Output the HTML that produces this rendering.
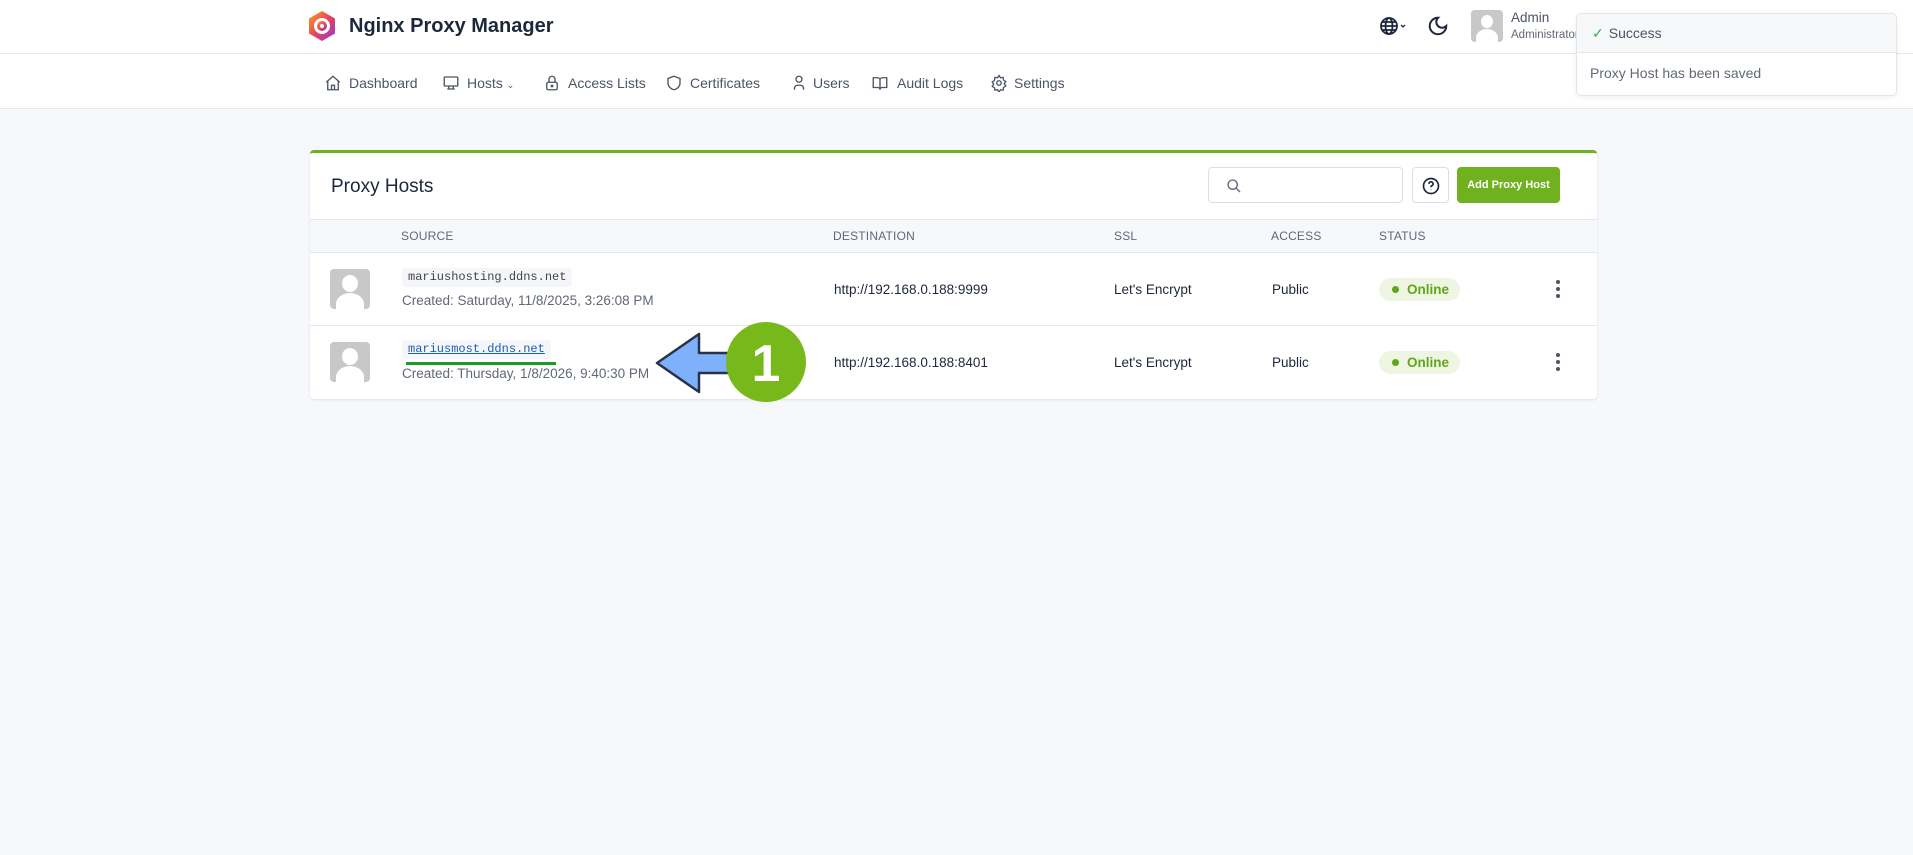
<!DOCTYPE html>
<html><head><meta charset="utf-8"><style>
*{box-sizing:border-box;margin:0;padding:0}
body{width:1913px;height:855px;background:#f6f8fb;font-family:"Liberation Sans",sans-serif;color:#1d273b;position:relative;overflow:hidden}
.abs{position:absolute}
.hdr{left:0;top:0;width:1913px;height:54px;background:#fff;border-bottom:1px solid #e6e8eb}
.nav{left:0;top:54px;width:1913px;height:55px;background:#fff;border-bottom:1px solid #e6e8eb}
.ni{position:absolute;top:74px;height:18px;font-size:14px;color:#4b5565}
.ni svg{position:absolute;left:0;top:0}
.ni span{position:absolute;top:0;line-height:18px;white-space:nowrap}
.card{left:310px;top:150px;width:1287px;height:249px;background:#fff;border-top:3px solid #6fb11e;border-radius:4px;box-shadow:0 1px 2px rgba(0,0,0,.1)}
.th{position:absolute;top:229px;font-size:12px;color:#616876;letter-spacing:.2px}
.t{position:absolute;font-size:13.5px}
.chip{position:absolute;left:402px;height:19px;background:#f4f6f9;border-radius:4px;font-family:"Liberation Mono",monospace;font-size:12px;color:#444;padding:2px 6px}
.av{position:absolute;left:330px;width:40px;height:40px;background:#c8c8c8;border-radius:4px;overflow:hidden}
.pill{position:absolute;left:1379px;width:81px;height:23px;background:#eef6e3;border-radius:12px;color:#5fa618;font-size:13.5px;font-weight:bold;padding:4px 0 0 28px}
.pill:before{content:"";position:absolute;left:13px;top:8px;width:7px;height:7px;border-radius:50%;background:#5fa618}
.dots{position:absolute;left:1556px;width:4px}
.dots i{display:block;width:4px;height:4px;border-radius:50%;background:#4b5565;margin-bottom:3px}
</style></head><body>
<div class="abs hdr"></div>
<svg class="abs" style="left:307px;top:10px" width="30" height="32" viewBox="0 0 30 32"><defs><linearGradient id="g" x1="0" y1="0" x2="1" y2="1"><stop offset="0" stop-color="#f5a623"/><stop offset=".5" stop-color="#e8445a"/><stop offset="1" stop-color="#8e3bd1"/></linearGradient></defs><polygon points="15,1 28,8.5 28,23.5 15,31 2,23.5 2,8.5" fill="url(#g)"/><circle cx="15" cy="16" r="8" fill="#fff"/><circle cx="15" cy="16" r="5" fill="url(#g)"/><circle cx="15" cy="16" r="2" fill="#fff"/></svg>
<div class="abs" style="left:349px;top:15px;font-size:20px;font-weight:bold;color:#1d273b">Nginx Proxy Manager</div>
<svg class="abs" style="left:1379px;top:16px" width="30" height="20" viewBox="0 0 30 20" fill="none" stroke="#1d273b" stroke-width="1.8"><circle cx="10" cy="10" r="8"/><ellipse cx="10" cy="10" rx="3.5" ry="8"/><path d="M2 10h16M3.5 6h13M3.5 14h13"/><path d="M22 9l2 2 2-2" stroke-width="1.3"/></svg>
<svg class="abs" style="left:1427px;top:14px" width="22" height="24" viewBox="0 0 24 24" fill="none" stroke="#1d273b" stroke-width="2.2" stroke-linecap="round"><path d="M12 3a6 6 0 0 0 9 9 9 9 0 1 1-9-9z"/></svg>
<div class="abs" style="left:1471px;top:10px;width:32px;height:32px;background:#c8c8c8;border-radius:4px;overflow:hidden"><div style="position:absolute;left:10px;top:5px;width:12px;height:13px;border-radius:50%;background:#fff"></div><div style="position:absolute;left:5px;top:19px;width:22px;height:18px;border-radius:50% 50% 0 0;background:#fff"></div></div>
<div class="abs" style="left:1511px;top:10px;font-size:13.5px;color:#4b5565">Admin</div>
<div class="abs" style="left:1511px;top:29px;font-size:11.5px;color:#616876">Administrator</div>
<div class="abs nav"></div>
<div class="ni" style="left:324px"><svg width="18" height="18" viewBox="0 0 24 24" fill="none" stroke="#4b5565" stroke-width="1.8"><path d="M3 11l9-8 9 8M5 10v11h14V10M10 21v-6h4v6"/></svg><span style="left:25px">Dashboard</span></div>
<div class="ni" style="left:442px"><svg width="18" height="18" viewBox="0 0 24 24" fill="none" stroke="#4b5565" stroke-width="1.8"><rect x="3" y="4" width="18" height="12" rx="1"/><path d="M7 20h10M9 16v4M15 16v4"/></svg><span style="left:25px">Hosts <small style="font-size:9px">&#8964;</small></span></div>
<div class="ni" style="left:543px"><svg width="18" height="18" viewBox="0 0 24 24" fill="none" stroke="#4b5565" stroke-width="1.8"><rect x="5" y="11" width="14" height="10" rx="2"/><path d="M8 11V7a4 4 0 0 1 8 0v4"/><circle cx="12" cy="16" r="1"/></svg><span style="left:25px">Access Lists</span></div>
<div class="ni" style="left:665px"><svg width="18" height="18" viewBox="0 0 24 24" fill="none" stroke="#4b5565" stroke-width="1.8"><path d="M12 3l8 3v6c0 5-4 8-8 9-4-1-8-4-8-9V6z"/></svg><span style="left:25px">Certificates</span></div>
<div class="ni" style="left:790px"><svg width="18" height="18" viewBox="0 0 24 24" fill="none" stroke="#4b5565" stroke-width="1.8"><circle cx="12" cy="7" r="4"/><path d="M6 21v-2a4 4 0 0 1 4-4h4a4 4 0 0 1 4 4v2"/></svg><span style="left:23px">Users</span></div>
<div class="ni" style="left:871px"><svg width="18" height="18" viewBox="0 0 24 24" fill="none" stroke="#4b5565" stroke-width="1.8"><path d="M3 5h6a3 3 0 0 1 3 3v13a3 3 0 0 0-3-3H3zM21 5h-6a3 3 0 0 0-3 3v13a3 3 0 0 1 3-3h6z"/></svg><span style="left:26px">Audit Logs</span></div>
<div class="ni" style="left:990px"><svg width="18" height="18" viewBox="0 0 24 24" fill="none" stroke="#4b5565" stroke-width="1.8"><circle cx="12" cy="12" r="3"/><path d="M12 2l2 3 3.5-.5.5 3.5 3 2-2 3 2 3-3 2-.5 3.5-3.5-.5-2 3-2-3-3.5.5L6 18.5l-3-2 2-3-2-3 3-2L6.5 4.5 10 5z"/></svg><span style="left:24px">Settings</span></div>

<div class="abs" style="left:1576px;top:13px;width:321px;height:83px;background:#fff;border:1px solid #e2e5ea;border-radius:5px;box-shadow:0 2px 6px rgba(0,0,0,.06);overflow:hidden">
<div style="height:39px;background:#f7f8fa;border-bottom:1px solid #e6e8eb;padding:11px 0 0 15px;font-size:14px;color:#4b5565"><span style="color:#2fb344;margin-right:5px">&#10003;</span>Success</div>
<div style="padding:12px 0 0 13px;font-size:14px;color:#616876">Proxy Host has been saved</div></div>

<div class="abs card"></div>
<div class="abs" style="left:331px;top:176px;font-size:19px;color:#1d273b">Proxy Hosts</div>
<div class="abs" style="left:1208px;top:167px;width:195px;height:36px;border:1px solid #dadfe5;border-radius:4px"><svg style="position:absolute;left:17px;top:10px" width="16" height="16" viewBox="0 0 24 24" fill="none" stroke="#616876" stroke-width="2"><circle cx="10" cy="10" r="7"/><path d="M15 15l6 6"/></svg></div>
<div class="abs" style="left:1412px;top:167px;width:37px;height:36px;border:1px solid #dadfe5;border-radius:4px"><svg style="position:absolute;left:8px;top:8px" width="20" height="20" viewBox="0 0 24 24" fill="none" stroke="#1d273b" stroke-width="2"><circle cx="12" cy="12" r="9"/><path d="M9.5 9.5a2.5 2.5 0 1 1 3 2.4c-.5.2-.5.6-.5 1.6M12 16.5v.5"/></svg></div>
<div class="abs" style="left:1457px;top:167px;width:103px;height:36px;background:#6fb11e;border-radius:4px;color:#fff;font-size:11px;font-weight:bold;text-align:center;line-height:36px">Add Proxy Host</div>
<div class="abs" style="left:310px;top:219px;width:1287px;height:34px;background:#f6f8fb;border-top:1px solid #e6e8eb;border-bottom:1px solid #e6e8eb"></div>
<div class="th" style="left:401px">SOURCE</div><div class="th" style="left:833px">DESTINATION</div><div class="th" style="left:1114px">SSL</div><div class="th" style="left:1271px">ACCESS</div><div class="th" style="left:1379px">STATUS</div>
<div class="abs" style="left:310px;top:325px;width:1287px;height:1px;background:#e6e8eb"></div>

<div class="av" style="top:269px"><div style="position:absolute;left:12px;top:6px;width:16px;height:17px;border-radius:50%;background:#fff"></div><div style="position:absolute;left:6px;top:24px;width:28px;height:22px;border-radius:50% 50% 0 0;background:#fff"></div></div>
<div class="chip" style="top:268px">mariushosting.ddns.net</div>
<div class="t" style="left:402px;top:293px;color:#616876">Created: Saturday, 11/8/2025, 3:26:08 PM</div>
<div class="t" style="left:834px;top:282px">http://192.168.0.188:9999</div>
<div class="t" style="left:1114px;top:282px">Let's Encrypt</div>
<div class="t" style="left:1272px;top:282px">Public</div>
<div class="pill" style="top:278px">Online</div>
<div class="dots" style="top:280px"><i></i><i></i><i></i></div>

<div class="av" style="top:342px"><div style="position:absolute;left:12px;top:6px;width:16px;height:17px;border-radius:50%;background:#fff"></div><div style="position:absolute;left:6px;top:24px;width:28px;height:22px;border-radius:50% 50% 0 0;background:#fff"></div></div>
<div class="chip" style="top:340px;color:#1a5fb4;text-decoration:underline">mariusmost.ddns.net</div>
<div class="abs" style="left:406px;top:362px;width:150px;height:3px;background:#1f9a2a"></div>
<div class="t" style="left:402px;top:366px;color:#616876">Created: Thursday, 1/8/2026, 9:40:30 PM</div>
<div class="t" style="left:834px;top:355px">http://192.168.0.188:8401</div>
<div class="t" style="left:1114px;top:355px">Let's Encrypt</div>
<div class="t" style="left:1272px;top:355px">Public</div>
<div class="pill" style="top:351px">Online</div>
<div class="dots" style="top:353px"><i></i><i></i><i></i></div>

<svg class="abs" style="left:650px;top:320px" width="170" height="90" viewBox="650 320 170 90"><polygon points="657,363 699,334 699,353 740,353 740,373 699,373 699,392" fill="#7fb0fb" stroke="#2a3344" stroke-width="2.5" stroke-linejoin="round"/><circle cx="766" cy="362" r="40" fill="#77b81a"/><text x="766" y="381" text-anchor="middle" font-family="Liberation Sans,sans-serif" font-weight="bold" font-size="52" fill="#fff">1</text></svg>
</body></html>
